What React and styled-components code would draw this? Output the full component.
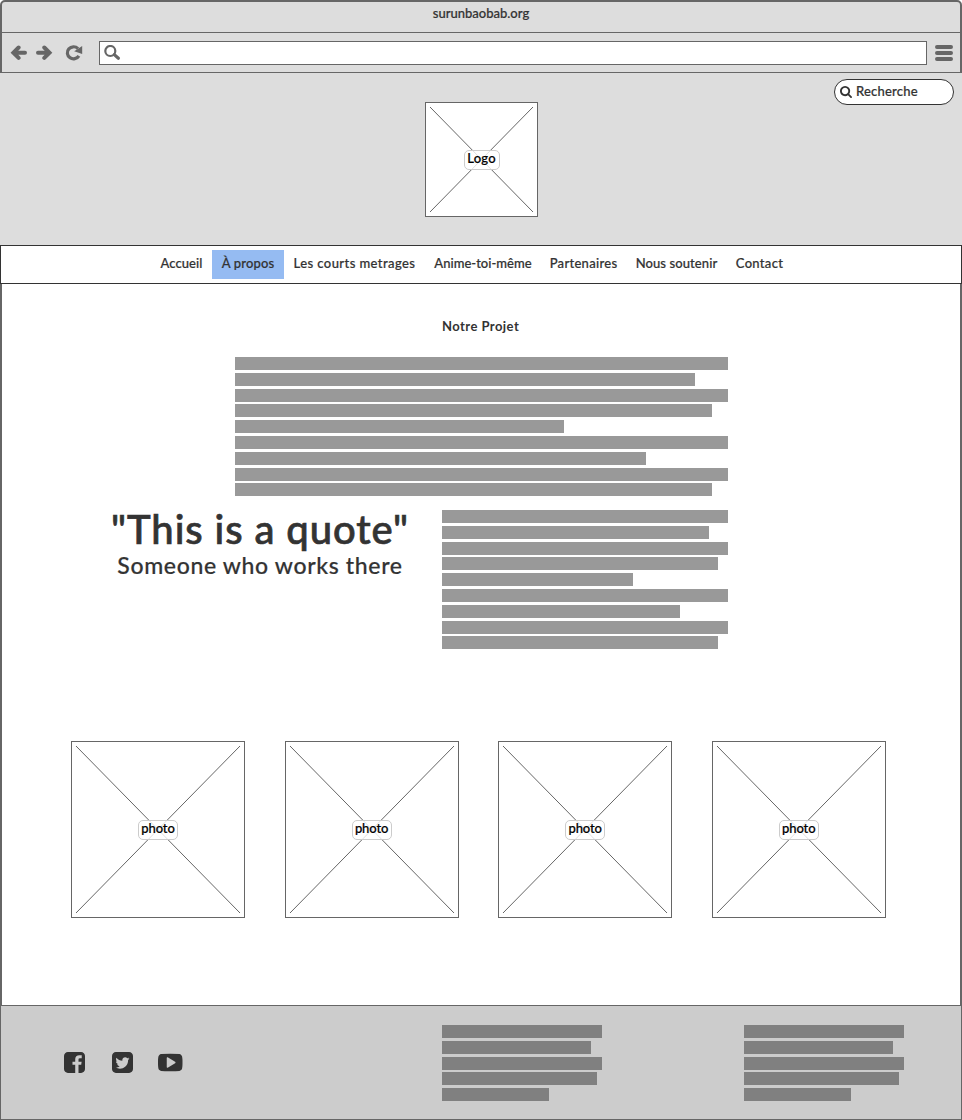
import React from "react";
import styled, { createGlobalStyle } from "styled-components";

const GlobalStyle = createGlobalStyle`
  * { box-sizing: border-box; }
  body { margin: 0; background: #fff; }
`;

const Page = styled.div`
  width: 962px;
  height: 1120px;
  display: flex;
  flex-direction: column;
  font-family: Lato, "Open Sans", sans-serif;
  font-size: 13px;
  font-weight: 500;
  color: #333;
  overflow: hidden;
`;

const Label = styled.span`
  display: block;
  white-space: nowrap;
  font-size: ${(p) => p.$size || 13}px;
  line-height: ${(p) => p.$line || 16}px;
  font-weight: ${(p) => p.$weight || 500};
  letter-spacing: ${(p) => p.$track || 0}px;
  -webkit-text-stroke: ${(p) => p.$stroke ?? 0.2}px currentColor;
`;

const Chrome = styled.div`
  height: 73px;
  flex: none;
  background: #ddd;
  border: 2px solid #666;
  border-bottom-width: 1px;
  border-radius: 5px 5px 0 0;
`;

const TitleBar = styled.div`
  height: 31px;
  padding-top: 3px;
  display: flex;
  justify-content: center;
  border-bottom: 1px solid #666;
`;

const Toolbar = styled.div`
  height: 39px;
  display: flex;
  align-items: center;
  padding: 0 7px 0 8px;
`;

const ToolIcon = styled.svg`
  flex: none;
  display: block;
  width: ${(p) => p.$w}px;
  height: ${(p) => p.$h}px;
  margin-left: ${(p) => p.$ml || 0}px;
`;

const AddressBar = styled.div`
  flex: 1;
  height: 24px;
  margin: 0 8px 0 16px;
  padding: 3px 4px;
  background: #fff;
  border: 1px solid #666;
`;

const Header = styled.header`
  height: 172px;
  flex: none;
  background: #ddd;
  display: grid;
  grid-template-columns: 1fr 113px 1fr;
  padding: 6px 8px 0;
`;

const SearchField = styled.div`
  grid-column: 3;
  justify-self: end;
  width: 120px;
  height: 26px;
  border: 1px solid #333;
  border-radius: 13px;
  background: #fff;
  display: flex;
  align-items: center;
  gap: 4px;
  padding: 0 0 1px 5px;
  ${Label} { margin-top: -1px; }
`;

const LogoSlot = styled.div`
  grid-column: 2;
  margin-top: 23px;
`;

const Frame = styled.div`
  display: grid;
  place-items: center;
  width: ${(p) => p.$w}px;
  height: ${(p) => p.$h}px;
  background: #fff;
  border: 1px solid #666;
  > * { grid-area: 1 / 1; }
`;

const Cross = styled.svg`
  display: block;
  width: 100%;
  height: 100%;
  min-height: 0;
`;

const Tag = styled.div`
  width: ${(p) => p.$w}px;
  height: 20px;
  margin-top: 1px;
  margin-left: ${(p) => p.$ml || 0}px;
  display: flex;
  justify-content: center;
  color: #000;
  background: rgba(255, 255, 255, 0.8);
  border: 1px solid #ccc;
  border-radius: 5px;
`;

const Nav = styled.nav`
  height: 39px;
  flex: none;
  display: flex;
  padding: 4px 0 0 150px;
  background: #fff;
  border: 1px solid #333;
`;

const NavItem = styled.a`
  width: ${(p) => p.$w}px;
  height: 29px;
  padding-top: 5px;
  display: flex;
  justify-content: center;
  background: ${(p) => (p.$active ? "#95bbf2" : "transparent")};
`;

const Main = styled.main`
  height: 721px;
  flex: none;
  border: solid #666;
  border-width: 0 2px;
  padding-top: 34px;
`;

const Heading = styled.div`
  padding-left: 440px;
`;

const Intro = styled.div`
  margin: 23px 0 0 233px;
`;

const QuoteRow = styled.div`
  display: flex;
  height: 153px;
  padding-left: 100px;
`;

const Quote = styled.blockquote`
  width: 316px;
  margin: 0;
  display: flex;
  flex-direction: column;
  align-items: center;
`;

const TextBlock = styled.div`
  width: ${(p) => p.$w}px;
  height: ${(p) => p.$h}px;
  margin-left: ${(p) => p.$ml || 0}px;
  margin-top: ${(p) => p.$mt || 0}px;
  display: flex;
  flex-direction: column;
  gap: 2.8px;
`;

const Bar = styled.div`
  flex: none;
  height: 13px;
  width: ${(p) => p.$w}%;
  background: ${(p) => p.$color};
`;

const Gallery = styled.div`
  display: flex;
  gap: 39.6px;
  padding: 78px 0 0 69px;
`;

const Footer = styled.footer`
  height: 115px;
  flex: none;
  display: flex;
  background: #ccc;
  border: 1px solid #666;
`;

const Social = styled.div`
  width: 441px;
  display: flex;
  gap: 27px;
  padding: 46px 0 0 62.5px;
`;

const SocialIcon = styled.svg`
  display: block;
  flex: none;
  width: ${(p) => p.$w}px;
  height: 21px;
  fill: #333;
  &:last-child { margin-left: -1.5px; }
`;

const LINES = [100, 93.3, 100, 96.66, 66.7, 100, 83.3, 100, 96.66];

const NAV = [
  { text: "Accueil", w: 61, track: 0.1 },
  { text: "À propos", w: 72, track: 0.15 },
  { text: "Les courts metrages", w: 141, track: 0.42 },
  { text: "Anime-toi-même", w: 116, track: 0.02 },
  { text: "Partenaires", w: 85, track: 0.3 },
  { text: "Nous soutenir", w: 101, track: 0.1 },
  { text: "Contact", w: 65, track: 0.3 },
];

function Paragraph({ count = 9, color = "#999", ...box }) {
  return (
    <TextBlock {...box}>
      {LINES.slice(0, count).map((w, i) => (
        <Bar key={i} $w={w} $color={color} />
      ))}
    </TextBlock>
  );
}

function Placeholder({ w, h, tag, shift, children }) {
  const iw = w - 2;
  const ih = h - 2;
  return (
    <Frame $w={w} $h={h}>
      <Cross viewBox={`0 0 ${iw} ${ih}`} stroke="#666" strokeWidth="1">
        <path d={`M4 4L${iw - 4} ${ih - 4}M${iw - 4} 4L4 ${ih - 4}`} />
      </Cross>
      <Tag $w={tag} $ml={shift}>{children}</Tag>
    </Frame>
  );
}

const FACEBOOK =
  "M1248 1408q119 0 203.5 -84.5t84.5 -203.5v-960q0 -119 -84.5 -203.5t-203.5 -84.5h-188v595h199l30 232h-229v148q0 56 23.5 84t91.5 28l122 1v207q-63 9 -178 9q-136 0 -217.5 -80t-81.5 -226v-171h-200v-232h200v-595h-532q-119 0 -203.5 84.5t-84.5 203.5v960q0 119 84.5 203.5t203.5 84.5h960z";
const TWITTER =
  "M1280 926q-56 -25 -121 -34q68 40 93 117q-65 -38 -134 -51q-61 66 -153 66q-87 0 -148.5 -61.5t-61.5 -148.5q0 -29 5 -48q-129 7 -242 65t-192 155q-29 -50 -29 -106q0 -114 91 -175q-47 1 -100 26v-2q0 -75 50 -133.5t123 -72.5q-29 -8 -51 -8q-13 0 -39 4q21 -63 74.5 -104t121.5 -42q-116 -90 -261 -90q-26 0 -50 3q148 -94 322 -94q112 0 210 35.5t168 95t120.5 137t75 162t24.5 168.5q0 18 -1 27q63 45 105 109zM1536 1120v-960q0 -119 -84.5 -203.5t-203.5 -84.5h-960q-119 0 -203.5 84.5t-84.5 203.5v960q0 119 84.5 203.5t203.5 84.5h960q119 0 203.5 -84.5t84.5 -203.5z";
const YOUTUBE =
  "M1280 640q0 37 -30 54l-512 320q-31 20 -65 2q-33 -18 -33 -56v-640q0 -38 33 -56q16 -8 31 -8q20 0 34 10l512 320q30 17 30 54zM1792 640q0 -96 -1 -150t-8.5 -136.5t-22.5 -147.5q-16 -73 -69 -123t-124 -58q-222 -25 -671 -25t-671 25q-71 8 -124.5 58t-69.5 123q-14 65 -21.5 147.5t-8.5 136.5t-1 150t1 150t8.5 136.5t22.5 147.5q16 73 69 123t124 58q222 25 671 25t671 -25q71 -8 124.5 -58t69.5 -123q14 -65 21.5 -147.5t8.5 -136.5t1 -150z";
const SEARCH =
  "M1152 704q0 185 -131.5 316.5t-316.5 131.5t-316.5 -131.5t-131.5 -316.5t131.5 -316.5t316.5 -131.5t316.5 131.5t131.5 316.5zM1664 -128q0 -52 -38 -90t-90 -38q-54 0 -90 38l-343 342q-179 -124 -399 -124q-143 0 -273.5 55.5t-225 150t-150 225t-55.5 273.5t55.5 273.5t150 225t225 150t273.5 55.5t273.5 -55.5t225 -150t150 -225t55.5 -273.5q0 -220 -124 -399l343 -343q37 -37 37 -90z";

function BrandIcon({ path, w, units = 1536 }) {
  return (
    <SocialIcon $w={w} viewBox={`0 0 ${units} 1536`}>
      <path transform="translate(0 1408) scale(1 -1)" d={path} />
    </SocialIcon>
  );
}

export default function App() {
  return (
    <Page>
      <GlobalStyle />
      <Chrome>
        <TitleBar>
          <Label $track={0}>surunbaobab.org</Label>
        </TitleBar>
        <Toolbar>
          <ToolIcon $w={18} $h={16} viewBox="0 0 18 16" fill="none" stroke="#666" strokeWidth="4">
            <path d="M3.4 7.7H15M8.6 2.5L3.4 7.7L8.6 12.9" strokeLinecap="round" />
          </ToolIcon>
          <ToolIcon $w={18} $h={16} $ml={7} viewBox="0 0 18 16" fill="none" stroke="#666" strokeWidth="4">
            <path d="M3 7.7H14.5M9.3 2.5L14.5 7.7L9.3 12.9" strokeLinecap="round" />
          </ToolIcon>
          <ToolIcon $w={18} $h={16} $ml={12} viewBox="0 0 18 16">
            <path d="M13 3.6A6.2 6 0 1 0 13.9 10.8" fill="none" stroke="#666" strokeWidth="3.2" />
            <path d="M17.2 1V9L9.2 6.3Z" fill="#666" />
          </ToolIcon>
          <AddressBar>
            <ToolIcon $w={17} $h={16} viewBox="0 0 17 16" fill="none" stroke="#666">
              <circle cx="6.3" cy="6" r="5" strokeWidth="2.2" />
              <path d="M10.3 9.6L14.4 13.2" strokeWidth="3.2" strokeLinecap="round" />
            </ToolIcon>
          </AddressBar>
          <ToolIcon $w={18} $h={16} viewBox="0 0 18 16" stroke="#666" strokeWidth="4" strokeLinecap="round">
            <path d="M2 2H16M2 8H16M2 14H16" />
          </ToolIcon>
        </Toolbar>
      </Chrome>

      <Header>
        <LogoSlot>
          <Placeholder w={113} h={115} tag={36} shift={1}>
            <Label $line={14} $track={0.2}>Logo</Label>
          </Placeholder>
        </LogoSlot>
        <SearchField>
          <ToolIcon $w={12} $h={12} viewBox="0 0 1664 1664" fill="#333">
            <path transform="translate(0 1408) scale(1 -1)" d={SEARCH} />
          </ToolIcon>
          <Label $track={0.2}>Recherche</Label>
        </SearchField>
      </Header>

      <Nav>
        {NAV.map((n, i) => (
          <NavItem key={n.text} $w={n.w} $active={i === 1}>
            <Label $track={n.track}>{n.text}</Label>
          </NavItem>
        ))}
      </Nav>

      <Main>
        <Heading>
          <Label $weight={700} $track={0.45} $stroke={0}>Notre Projet</Label>
        </Heading>
        <Intro>
          <Paragraph $w={493} $h={153} />
        </Intro>
        <QuoteRow>
          <Quote>
            <Label $size={40} $line={39} $track={0.9} $stroke={0.7}>"This is a quote"</Label>
            <Label $size={23} $line={32} $track={0.65} $stroke={0.2}>Someone who works there</Label>
          </Quote>
          <Paragraph $w={286} $h={140} $ml={24} />
        </QuoteRow>
        <Gallery>
          {[1, 2, 3, 4].map((n) => (
            <Placeholder key={n} w={174} h={177} tag={40}>
              <Label $line={14} $track={-0.1}>photo</Label>
            </Placeholder>
          ))}
        </Gallery>
      </Main>

      <Footer>
        <Social>
          <BrandIcon path={FACEBOOK} w={21} />
          <BrandIcon path={TWITTER} w={21} />
          <BrandIcon path={YOUTUBE} w={24.5} units={1792} />
        </Social>
        <Paragraph count={5} color="#808080" $w={160} $h={80} $mt={19} />
        <Paragraph count={5} color="#808080" $w={160} $h={80} $mt={19} $ml={142} />
      </Footer>
    </Page>
  );
}
